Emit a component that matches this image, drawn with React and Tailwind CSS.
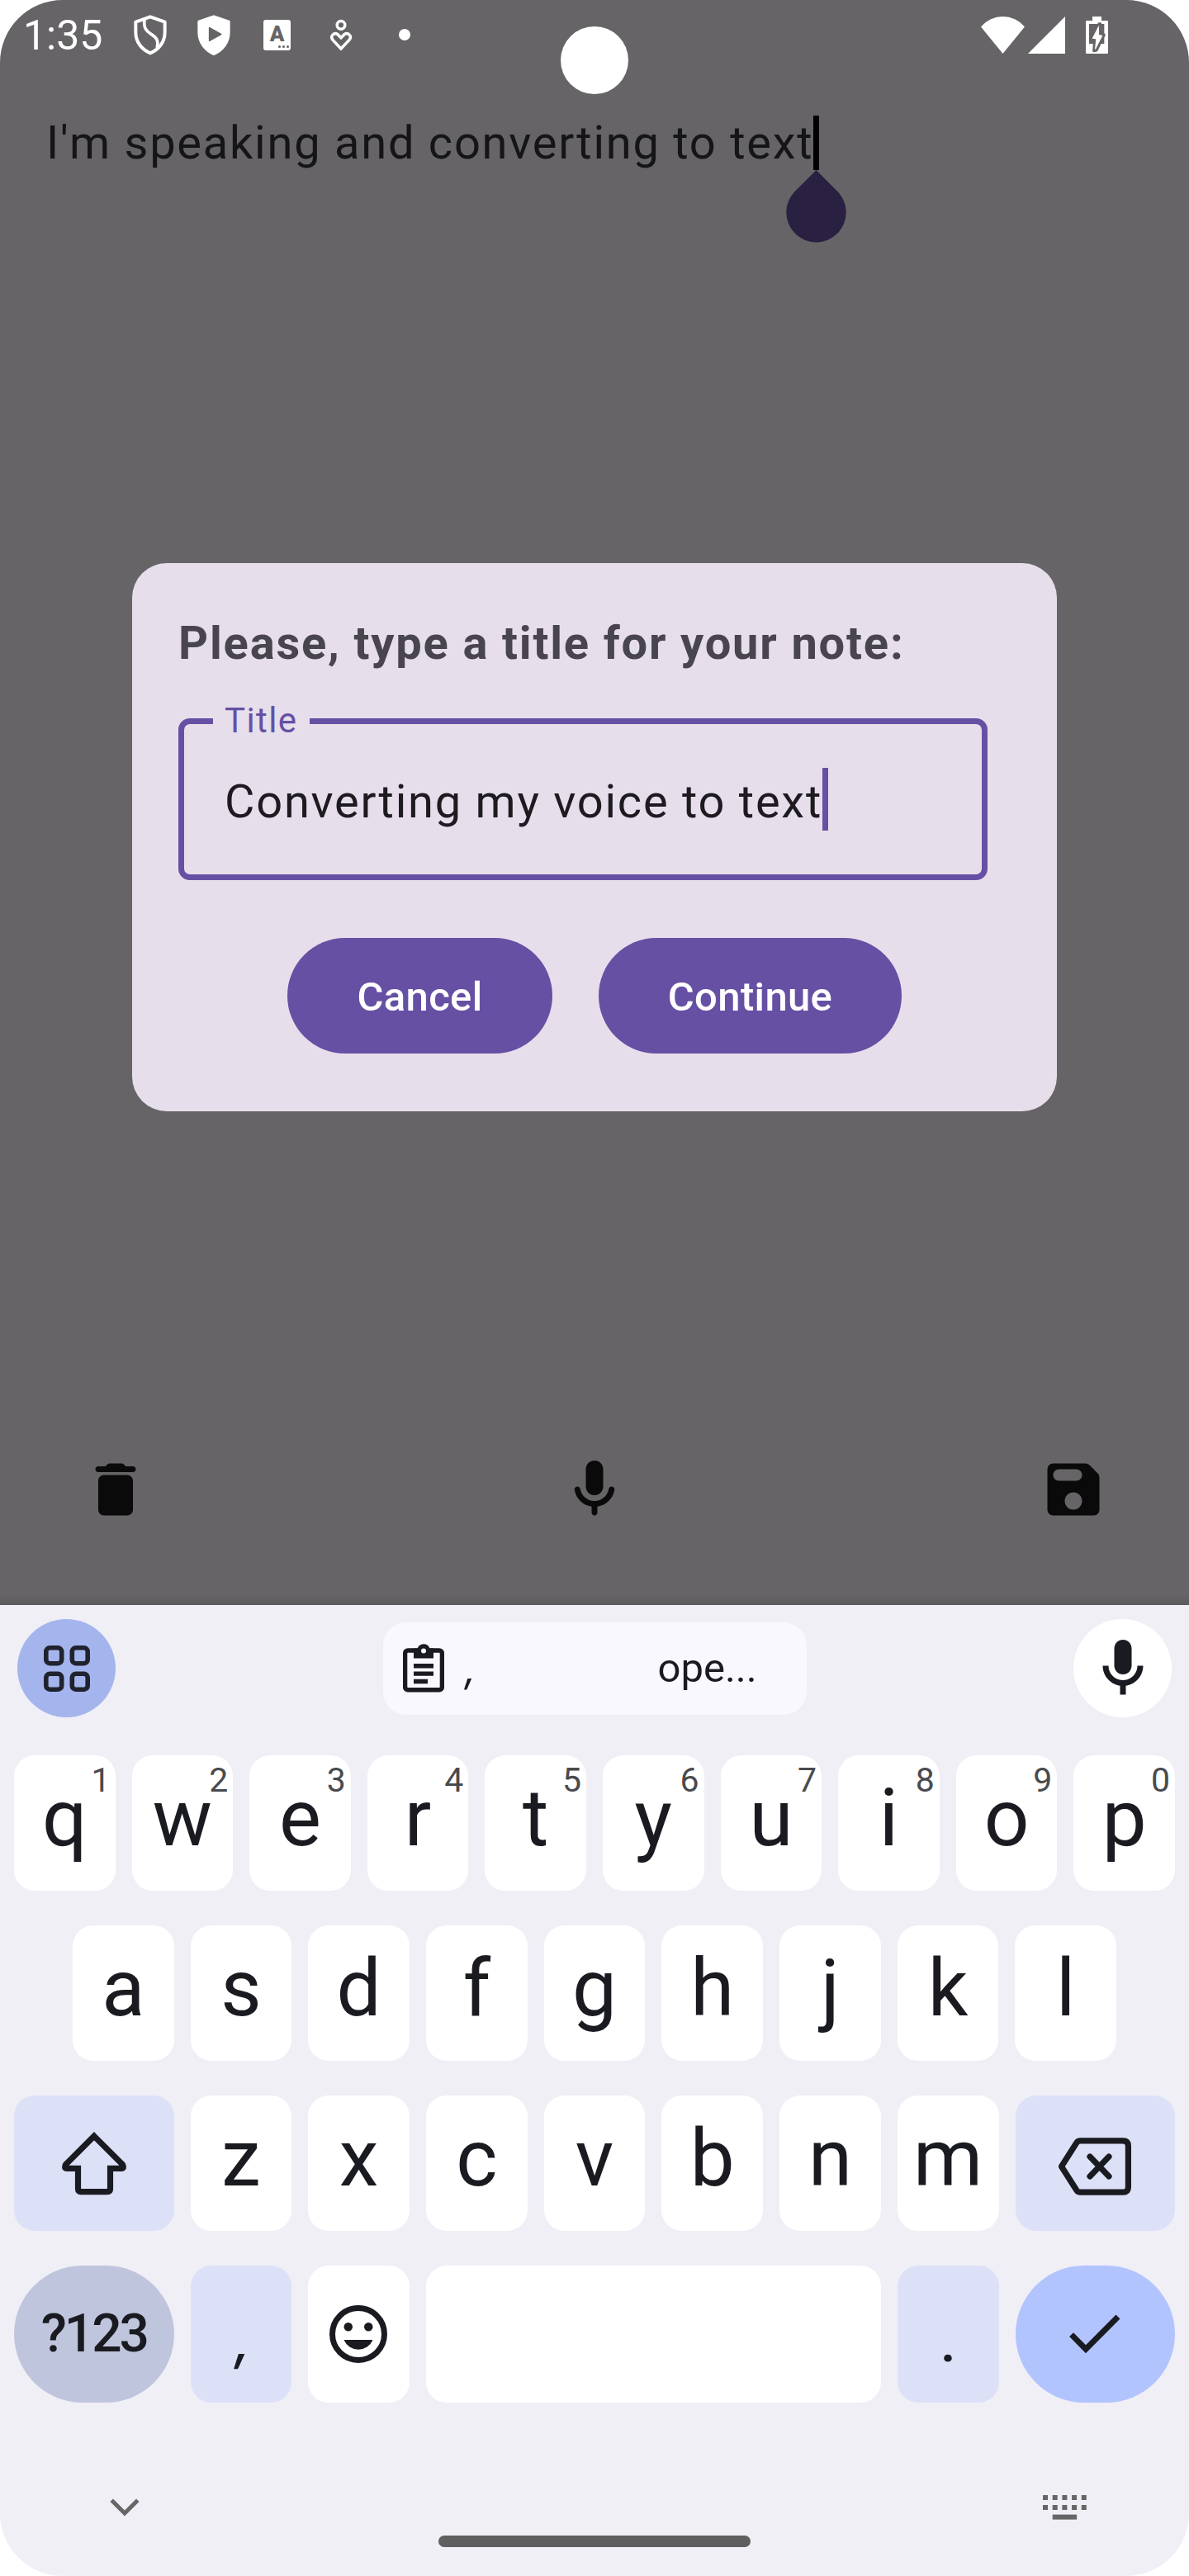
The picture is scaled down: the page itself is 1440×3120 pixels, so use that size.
import React from "react";

const INK = "#1a1b20";

function ShieldOutlineIcon() {
  return (
    <svg width="40" height="49" viewBox="35 23 120 147" fill="none" stroke="#fff">
      <path strokeWidth="12" strokeLinejoin="round" d="M95 30 L148 49 V86 C148 122 126 149 95 162 C64 149 42 122 42 86 V49 Z" />
      <path strokeWidth="11" d="M74 40 C70 70 80 82 98 93 C116 104 127 116 119 143" />
    </svg>
  );
}

function ShieldPlayIcon() {
  return (
    <svg width="40" height="49" viewBox="265 23 120 147">
      <path fill="#fff" stroke="#fff" strokeWidth="8" strokeLinejoin="round" d="M325 28 L380 47 V86 C380 124 356 154 325 166 C294 154 270 124 270 86 V47 Z" />
      <path fill="#666466" stroke="#666466" strokeWidth="5" strokeLinejoin="round" d="M309 70 V117 L351 93.5 Z" />
    </svg>
  );
}

function LetterBadge() {
  return (
    <div className="relative flex h-[37px] w-[33px] items-center justify-center rounded-[3px] bg-white text-[#666466]">
      <span className="pb-[2px] text-[26px] font-black leading-[37px]">A</span>
      <div className="absolute bottom-[3px] right-[2px] flex gap-[2px]">
        <span className="size-[3px] rounded-full bg-[#666466]" />
        <span className="size-[3px] rounded-full bg-[#666466]" />
        <span className="size-[3px] rounded-full bg-[#666466]" />
      </div>
    </div>
  );
}

function PersonHeartIcon() {
  return (
    <svg width="28" height="39" viewBox="745 37 84 117" fill="none" stroke="#fff">
      <circle cx="787" cy="59" r="14.5" strokeWidth="10.5" />
      <path strokeWidth="10.5" d="M787 145 L757 113 C746 99 762 84 775 93 L787 105 L799 93 C812 84 829 99 817 113 Z" />
    </svg>
  );
}

function WifiIcon() {
  return (
    <svg width="53" height="45" viewBox="24 27 158 134">
      <path fill="#fff" d="M24 64 A103 103 0 0 1 182 64 L103 161 Z" />
    </svg>
  );
}

function SignalIcon() {
  return (
    <svg width="45" height="45" viewBox="0 0 45 45">
      <path fill="#fff" d="M45 0 V45 H0 Z" />
    </svg>
  );
}

function BatteryIcon() {
  return (
    <svg width="27" height="45" viewBox="405 27 81 135">
      <path fill="#fff" d="M429 27 H462 V42 H482 Q486 42 486 46 V158 Q486 162 482 162 H409 Q405 162 405 158 V46 Q405 42 409 42 H429 Z" />
      <path fill="#666466" d="M417 54 H472 V126 H417 Z" />
      <path fill="#fff" stroke="#666466" strokeWidth="9" strokeLinejoin="round" d="M453 53 L423 108 L437 111 L434 152 L444 150 L472 93 L457 90 L458 53 Z" />
      <path fill="#fff" d="M452 60 L428 107 L442 109 L439 147 L466 96 L452 94 Z" />
    </svg>
  );
}

function StatusBar() {
  return (
    <div className="flex h-[84px] items-center justify-between pr-[98px] text-white">
      <div className="flex items-center">
        <span className="w-[143px] pl-[28px] pt-[2px] text-[50px] leading-[60px]">1:35</span>
        <div className="flex w-[77px] justify-center"><ShieldOutlineIcon /></div>
        <div className="flex w-[77px] justify-center"><ShieldPlayIcon /></div>
        <div className="flex w-[77px] justify-center"><LetterBadge /></div>
        <div className="flex w-[77px] justify-center"><PersonHeartIcon /></div>
        <div className="flex w-[77px] justify-center"><span className="size-[14px] rounded-full bg-white" /></div>
      </div>
      <div className="flex items-center">
        <WifiIcon />
        <div className="ml-[4px] mr-[25px]"><SignalIcon /></div>
        <BatteryIcon />
      </div>
    </div>
  );
}

function BarIcon({ d }) {
  return (
    <svg width="84" height="84" viewBox="0 0 24 24" fill="#0a0a0a">
      <path d={d} />
    </svg>
  );
}

const TRASH =
  "M6 19c0 1.1.9 2 2 2h8c1.1 0 2-.9 2-2V9c0-1.1-.9-2-2-2H8c-1.1 0-2 .9-2 2v10zM18 4h-2.5l-.71-.71c-.18-.18-.44-.29-.7-.29H9.91c-.26 0-.52.11-.7.29L8.5 4H6c-.55 0-1 .45-1 1s.45 1 1 1h12c.55 0 1-.45 1-1s-.45-1-1-1z";
const MIC_ROUND =
  "M12 14c1.66 0 3-1.34 3-3V5c0-1.66-1.34-3-3-3S9 3.34 9 5v6c0 1.66 1.34 3 3 3zm5.91-3c-.49 0-.9.36-.98.85C16.52 14.2 14.47 16 12 16s-4.52-1.8-4.93-4.15c-.08-.49-.49-.85-.98-.85-.61 0-1.09.54-1 1.14.49 3 2.89 5.35 5.91 5.78V20c0 .55.45 1 1 1s1-.45 1-1v-2.08c3.02-.43 5.42-2.78 5.91-5.78.1-.6-.39-1.14-1-1.14z";
const SAVE =
  "M17.59 3.59c-.38-.38-.89-.59-1.42-.59H5c-1.11 0-2 .9-2 2v14c0 1.1.9 2 2 2h14c1.1 0 2-.9 2-2V7.83c0-.53-.21-1.04-.59-1.41l-2.82-2.83zM12 19c-1.66 0-3-1.34-3-3s1.34-3 3-3 3 1.34 3 3-1.34 3-3 3zm1-10H7c-1.1 0-2-.9-2-2s.9-2 2-2h6c1.1 0 2 .9 2 2s-.9 2-2 2z";

function TitleDialog() {
  return (
    <div className="absolute left-[160px] top-[682px] h-[664px] w-[1120px] rounded-[42px] bg-[#e6dfeb] px-14 pt-[55px]">
      <h1 className="text-[56px] font-bold leading-[84px] tracking-[1.83px] text-[#49454f]">
        Please, type a title for your note:
      </h1>
      <div className="relative mt-[49px] flex h-[196px] w-[980px] items-center rounded-[14px] border-[7px] border-[#6650a4] pl-[49px]">
        <span className="absolute left-[35px] top-[-32px] w-[117px] bg-[#e6dfeb] pl-[14px] text-[42px] leading-[56px] tracking-[1.4px] text-[#6650a4]">
          Title
        </span>
        <span className="whitespace-nowrap pt-[5px] text-[56px] leading-[84px] tracking-[1.75px] text-[#1d1b20]">
          Converting my voice to text
        </span>
        <span className="h-[76px] w-[7px] bg-[#6650a4]" />
      </div>
      <div className="mt-[70px] flex justify-center gap-14 text-[49px] font-medium leading-[70px] tracking-[0.35px] text-white">
        <button className="h-[140px] w-[321px] rounded-full bg-[#6650a4] pt-[4px]">Cancel</button>
        <button className="h-[140px] w-[367px] rounded-full bg-[#6650a4] pt-[4px]">Continue</button>
      </div>
    </div>
  );
}

function NoteScreen() {
  return (
    <div className="relative flex h-[1944px] flex-col bg-[#666466]">
      <StatusBar />
      <div className="mt-[47px] flex h-[84px] items-center pl-14">
        <span className="whitespace-nowrap text-[56px] leading-[84px] tracking-[1.75px] text-[#151417]">
          I'm speaking and converting to text
        </span>
        <span className="relative h-[66px] w-[7px] bg-black">
          <svg className="absolute left-[-33px] top-[66px]" width="73" height="88" viewBox="0 0 73 88">
            <path fill="#2a2042" d="M36.5 0 L62 25.5 A36.2 36.2 0 1 1 11 25.5 Z" />
          </svg>
        </span>
      </div>
      <div className="mt-auto flex h-[84px] justify-between px-[98px] mb-[98px]">
        <BarIcon d={TRASH} />
        <BarIcon d={MIC_ROUND} />
        <BarIcon d={SAVE} />
      </div>
      <div className="absolute inset-x-0 bottom-0 h-[14px] bg-gradient-to-b from-transparent to-black/10" />
      <div className="absolute left-[679px] top-[32px] size-[82px] rounded-full bg-white" />
      <TitleDialog />
    </div>
  );
}

function Toolbar() {
  return (
    <div className="flex h-[119px] items-center justify-between px-[21px]">
      <div className="flex size-[119px] items-center justify-center rounded-full bg-[#a4b5ee]">
        <svg width="56" height="56" viewBox="0 0 56 56" fill="none" stroke="#20222e" strokeWidth="5.6">
          <rect x="2.8" y="2.8" width="18.9" height="18.9" rx="4.5" />
          <rect x="34.3" y="2.8" width="18.9" height="18.9" rx="4.5" />
          <rect x="2.8" y="34.3" width="18.9" height="18.9" rx="4.5" />
          <rect x="34.3" y="34.3" width="18.9" height="18.9" rx="4.5" />
        </svg>
      </div>
      <div className="flex h-[112px] w-[513px] items-center rounded-[28px] bg-[#f9f8fe] pl-[24px] text-[49px] font-[450] leading-[60px] text-[#1a1b20]">
        <svg width="50" height="59" viewBox="0 0 50 59">
          <rect x="2.6" y="8" width="44.8" height="47.8" rx="3.5" fill="none" stroke={INK} strokeWidth="5.4" />
          <path fill={INK} d="M13 5.5 H17.5 A8 8 0 0 1 32.5 5.5 H37 V17.5 H13 Z M13 24 H37 V29.4 H13 Z M13 33.4 H37 V38.8 H13 Z M13 42.8 H30 V48.2 H13 Z" />
          <circle cx="25" cy="8.6" r="3" fill="#f9f8fe" />
        </svg>
        <span className="w-[259px] pl-[25px] font-['Inter'] italic">,</span>
        <span className="pt-[1px]">ope...</span>
      </div>
      <div className="flex size-[119px] items-center justify-center rounded-full bg-white">
        <svg width="84" height="84" viewBox="0 0 24 24" fill={INK}>
          <path d="M12 14c1.66 0 3-1.34 3-3V5c0-1.66-1.34-3-3-3S9 3.34 9 5v6c0 1.66 1.34 3 3 3z" />
          <path d="M17 11c0 2.76-2.24 5-5 5s-5-2.24-5-5H5c0 3.53 2.61 6.43 6 6.92V21h2v-3.08c3.39-.49 6-3.39 6-6.92h-2z" />
        </svg>
      </div>
    </div>
  );
}

function Key({ letter, digit }) {
  return (
    <div className="relative flex h-[164px] min-w-0 flex-1 items-center justify-center rounded-[25px] bg-white pb-[12px] text-[96px] leading-[110px] text-[#1a1b20]">
      {letter}
      {digit && (
        <span className="absolute right-[6px] top-[6px] text-[41px] font-[450] leading-[48px] text-[#494a4e]">{digit}</span>
      )}
    </div>
  );
}

function Keys({ letters, digits = "" }) {
  return [...letters].map((l, i) => <Key key={l} letter={l} digit={digits[i]} />);
}

function Keyboard() {
  return (
    <div className="flex h-[1176px] flex-col bg-[#f0eff6] pt-[17px]">
      <Toolbar />
      <div className="mt-[46px] flex flex-col gap-[42px] px-[17px]">
        <div className="flex gap-5">
          <Keys letters="qwertyuiop" digits="1234567890" />
        </div>
        <div className="flex gap-5 px-[71px]">
          <Keys letters="asdfghjkl" />
        </div>
        <div className="flex gap-5">
          <div className="flex w-[193.5px] items-center justify-center rounded-[25px] bg-[#dde1f8]">
            <svg width="80" height="77" viewBox="0 0 80 77" fill="none" stroke={INK} strokeWidth="7.2">
              <path d="M40 5.2 L74.5 39.7 Q77 44.4 73 44.4 H59.5 V69 Q59.5 72.6 56 72.6 H24 Q20.5 72.6 20.5 69 V44.4 H7 Q3 44.4 5.5 39.7 Z" />
            </svg>
          </div>
          <Keys letters="zxcvbnm" />
          <div className="flex w-[193.5px] items-center justify-center rounded-[25px] bg-[#dde1f8] pt-[7px]">
            <svg width="90" height="70" viewBox="0 0 90 70" fill="none" stroke={INK} strokeWidth="7.2" strokeLinejoin="round" strokeLinecap="round">
              <path d="M4.5 35 L23 6 Q24.5 3.8 27 3.8 H79 Q85.4 3.8 85.4 10 V60 Q85.4 66.2 79 66.2 H27 Q24.5 66.2 23 64 Z" />
              <path d="M39 23 L62 47 M62 23 L39 47" />
            </svg>
          </div>
        </div>
        <div className="flex h-[166px] gap-5 text-[#1a1b20]">
          <div className="flex w-[193.5px] items-center justify-center rounded-full bg-[#c0c5de] text-[64px] font-medium leading-[80px] tracking-[-3px]">?123</div>
          <div className="flex w-[122.6px] items-center justify-center rounded-[25px] bg-[#dde1f8] pl-[4px] pt-[16px] font-['Inter'] text-[64px] font-medium italic leading-[80px]">,</div>
          <div className="flex w-[122.6px] items-center justify-center rounded-[25px] bg-white">
            <svg width="84" height="84" viewBox="0 0 24 24" fill={INK}>
              <circle cx="12" cy="12" r="9" fill="none" stroke={INK} strokeWidth="2" />
              <circle cx="8.5" cy="9.5" r="1.5" />
              <circle cx="15.5" cy="9.5" r="1.5" />
              <path d="M7 14 A5.4 5.4 0 0 0 17 14 Z" />
            </svg>
          </div>
          <div className="flex-1 rounded-[25px] bg-white" />
          <div className="flex w-[122.6px] items-center justify-center rounded-[25px] bg-[#dde1f8] pt-[26px] text-[60px] font-bold leading-[80px]">.</div>
          <div className="flex w-[193.5px] items-center justify-center rounded-full bg-[#b2c4fe]">
            <svg width="62" height="48" viewBox="0 0 62 48" fill="none" stroke={INK} strokeWidth="7">
              <path d="M2.6 24.6 L20 42.2 L59 3" />
            </svg>
          </div>
        </div>
      </div>
      <div className="mt-[101px] flex h-[52px] items-center justify-between pl-[133px] pr-[123px]">
        <svg width="36" height="22" viewBox="0 0 36 22" fill="none" stroke="#666" strokeWidth="5">
          <path d="M2.2 2.2 L18 18 L33.8 2.2" />
        </svg>
        <svg width="54" height="30" viewBox="0 0 54 30" fill="#666">
          {[0, 11.7, 23.4, 35.1, 46.8].map((x) => (
            <g key={x}>
              <rect x={x} y="0" width="6" height="6" />
              <rect x={x} y="12" width="6" height="6" />
            </g>
          ))}
          <rect x="11.7" y="23.6" width="29.4" height="6" />
        </svg>
      </div>
      <div className="mx-auto mt-[8px] h-[14px] w-[378px] rounded-full bg-[#5f5f60]" />
    </div>
  );
}

export default function App() {
  return (
    <div className="h-[3120px] w-[1440px] bg-white font-['Roboto',sans-serif]">
      <div className="h-full w-full overflow-hidden rounded-[76px]">
        <NoteScreen />
        <Keyboard />
      </div>
    </div>
  );
}
